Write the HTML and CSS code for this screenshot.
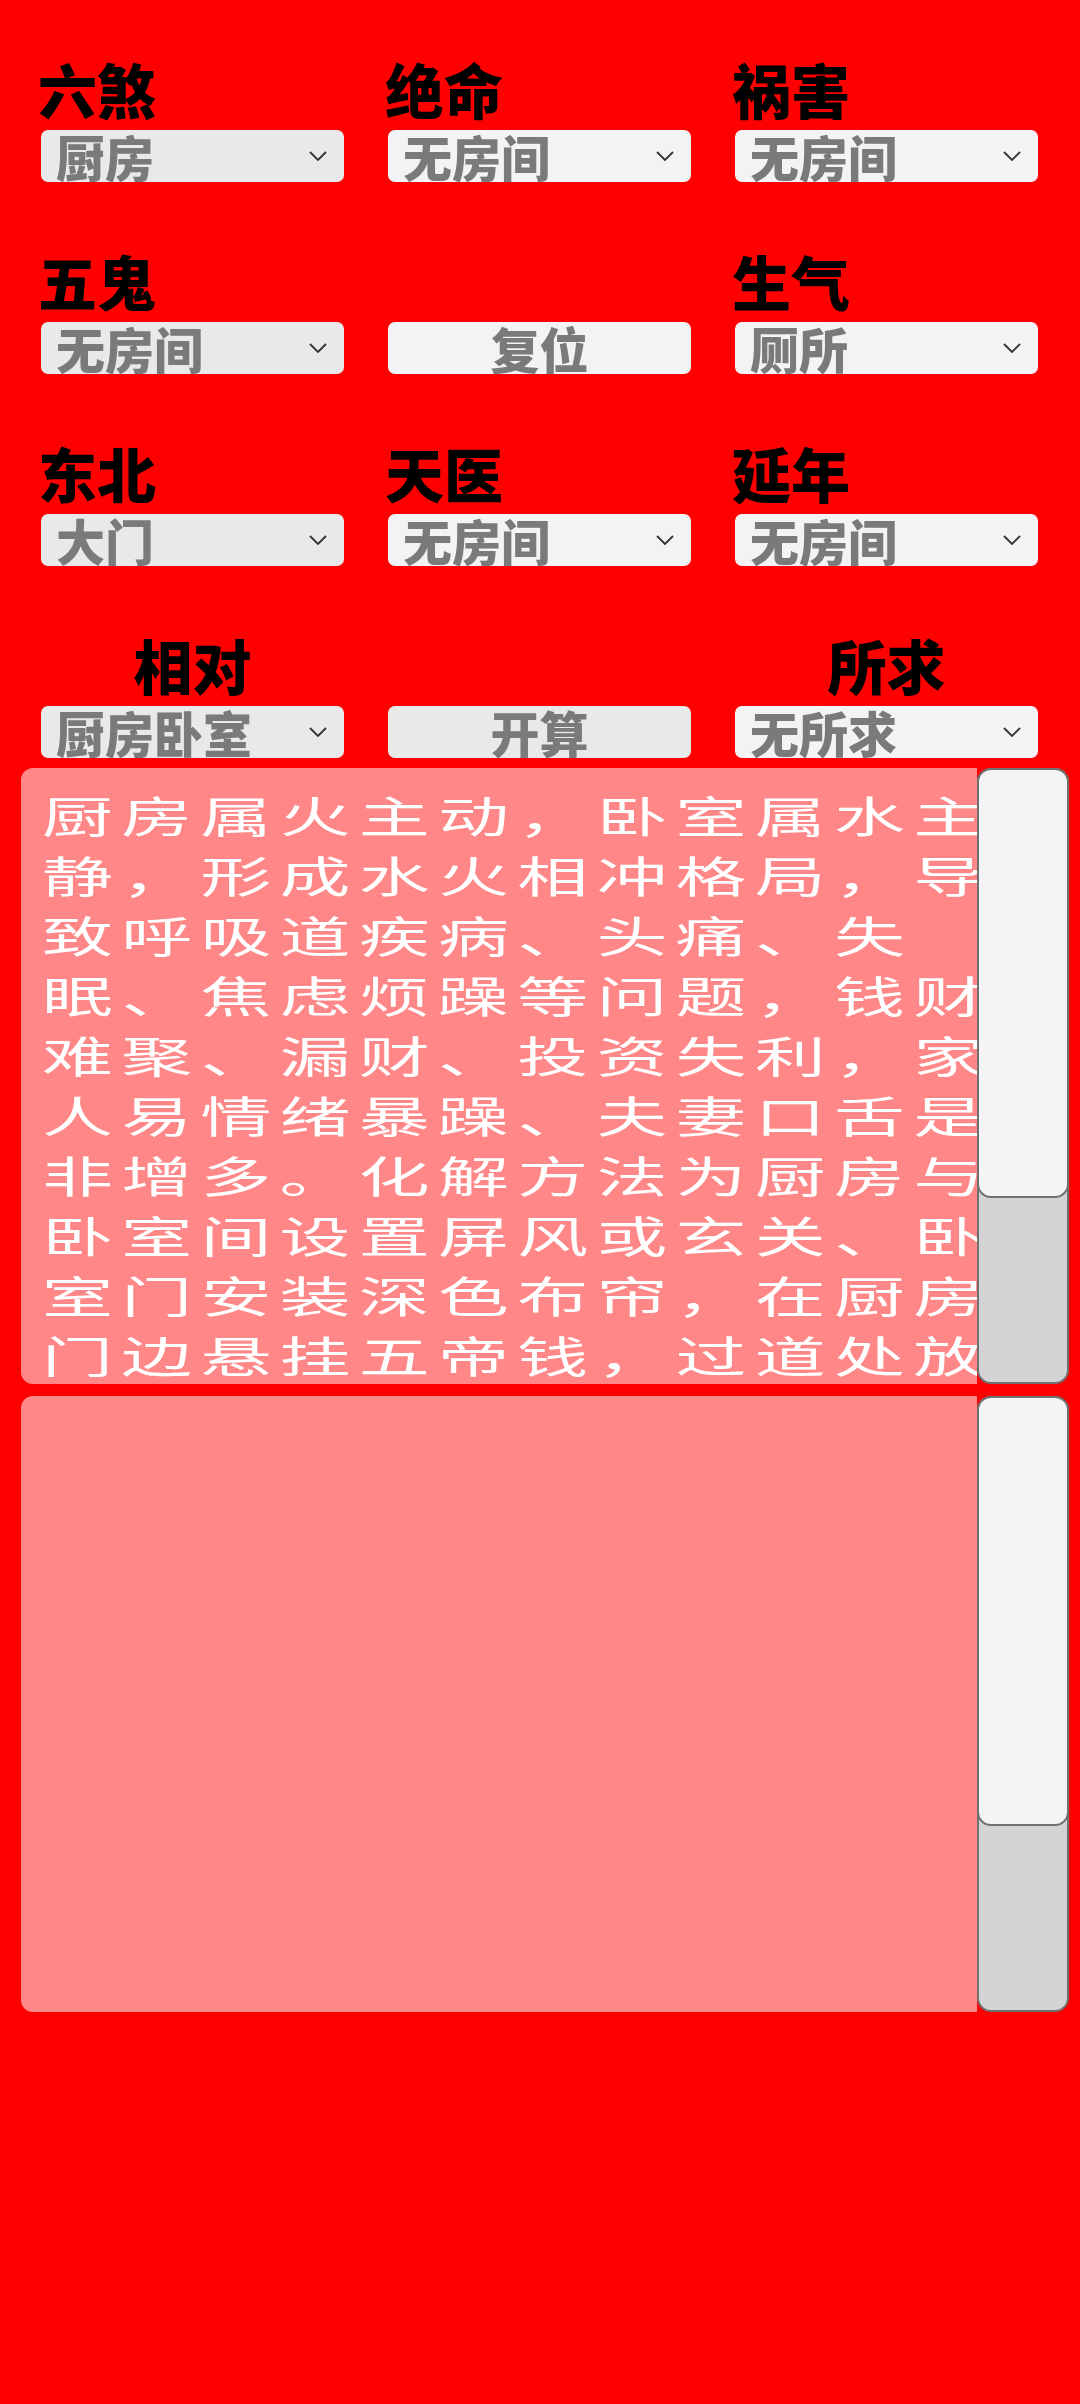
FILE: index.html
```html
<!DOCTYPE html>
<html lang="zh-CN">
<head>
<meta charset="utf-8">
<title>八宅</title>
<link rel="stylesheet" href="styles.css">
</head>
<body>
<div class="page">
  <div class="grid">
    <div class="cell">
      <div class="label">六煞</div>
      <div class="select dim"><span class="val">厨房</span><svg class="chev" width="18" height="10" viewBox="0 0 18 10"><path d="M1 1l8 8 8-8" fill="none" stroke="#333" stroke-width="1.8"/></svg></div>
    </div>
    <div class="cell">
      <div class="label">绝命</div>
      <div class="select"><span class="val">无房间</span><svg class="chev" width="18" height="10" viewBox="0 0 18 10"><path d="M1 1l8 8 8-8" fill="none" stroke="#333" stroke-width="1.8"/></svg></div>
    </div>
    <div class="cell">
      <div class="label">祸害</div>
      <div class="select"><span class="val">无房间</span><svg class="chev" width="18" height="10" viewBox="0 0 18 10"><path d="M1 1l8 8 8-8" fill="none" stroke="#333" stroke-width="1.8"/></svg></div>
    </div>

    <div class="cell">
      <div class="label">五鬼</div>
      <div class="select dim"><span class="val">无房间</span><svg class="chev" width="18" height="10" viewBox="0 0 18 10"><path d="M1 1l8 8 8-8" fill="none" stroke="#333" stroke-width="1.8"/></svg></div>
    </div>
    <div class="cell">
      <div class="label"></div>
      <div class="select button"><span class="val">复位</span></div>
    </div>
    <div class="cell">
      <div class="label">生气</div>
      <div class="select"><span class="val">厕所</span><svg class="chev" width="18" height="10" viewBox="0 0 18 10"><path d="M1 1l8 8 8-8" fill="none" stroke="#333" stroke-width="1.8"/></svg></div>
    </div>

    <div class="cell">
      <div class="label">东北</div>
      <div class="select dim"><span class="val">大门</span><svg class="chev" width="18" height="10" viewBox="0 0 18 10"><path d="M1 1l8 8 8-8" fill="none" stroke="#333" stroke-width="1.8"/></svg></div>
    </div>
    <div class="cell">
      <div class="label">天医</div>
      <div class="select"><span class="val">无房间</span><svg class="chev" width="18" height="10" viewBox="0 0 18 10"><path d="M1 1l8 8 8-8" fill="none" stroke="#333" stroke-width="1.8"/></svg></div>
    </div>
    <div class="cell">
      <div class="label">延年</div>
      <div class="select"><span class="val">无房间</span><svg class="chev" width="18" height="10" viewBox="0 0 18 10"><path d="M1 1l8 8 8-8" fill="none" stroke="#333" stroke-width="1.8"/></svg></div>
    </div>

    <div class="cell">
      <div class="label center">相对</div>
      <div class="select dim"><span class="val">厨房卧室</span><svg class="chev" width="18" height="10" viewBox="0 0 18 10"><path d="M1 1l8 8 8-8" fill="none" stroke="#333" stroke-width="1.8"/></svg></div>
    </div>
    <div class="cell">
      <div class="label"></div>
      <div class="select button dim"><span class="val">开算</span></div>
    </div>
    <div class="cell">
      <div class="label center">所求</div>
      <div class="select"><span class="val">无所求</span><svg class="chev" width="18" height="10" viewBox="0 0 18 10"><path d="M1 1l8 8 8-8" fill="none" stroke="#333" stroke-width="1.8"/></svg></div>
    </div>
  </div>

  <div class="textbox first">
    <div class="tb-content">
      <div class="tb-text">
        <div>厨房属火主动，卧室属水主</div>
        <div>静，形成水火相冲格局，导</div>
        <div>致呼吸道疾病、头痛、失</div>
        <div>眠、焦虑烦躁等问题，钱财</div>
        <div>难聚、漏财、投资失利，家</div>
        <div>人易情绪暴躁、夫妻口舌是</div>
        <div>非增多。化解方法为厨房与</div>
        <div>卧室间设置屏风或玄关、卧</div>
        <div>室门安装深色布帘，在厨房</div>
        <div>门边悬挂五帝钱，过道处放</div>
        <div>置绿植调和水火之气。</div>
      </div>
    </div>
    <div class="sb"><div class="sb-thumb"></div></div>
  </div>

  <div class="textbox second">
    <div class="tb-content"></div>
    <div class="sb"><div class="sb-thumb"></div></div>
  </div>
</div>
</body>
</html>
```

FILE: styles.css
```css
html, body {
  margin: 0;
  padding: 0;
  background: #ff0000;
}

body {
  min-height: 2404px;
  font-family: "Noto Sans CJK SC", "Noto Sans", sans-serif;
}

.page {
  width: 1080px;
}

.grid {
  display: grid;
  grid-template-columns: repeat(3, 303px);
  column-gap: 44px;
  row-gap: 68px;
  padding: 58px 0 0 41px;
}

.cell {
  display: flex;
  flex-direction: column;
}

.label {
  height: 62px;
  margin-bottom: 10px;
  font-size: 59px;
  line-height: 62px;
  font-weight: 900;
  color: #000;
  margin-left: -3px;
  white-space: nowrap;
}

.label.center {
  text-align: center;
  margin-left: 0;
}

.select {
  box-sizing: border-box;
  height: 52px;
  display: flex;
  align-items: flex-start;
  justify-content: space-between;
  padding: 0 17px 0 15px;
  background: #f3f3f5;
  border-radius: 7px;
  overflow: hidden;
}

.select.dim {
  background: #e9e9e9;
}

.select.button {
  justify-content: center;
  padding: 0;
}

.val {
  font-size: 49px;
  line-height: 51px;
  font-weight: 900;
  color: #7a7a7a;
  white-space: nowrap;
}

.chev {
  align-self: center;
  flex: none;
}

.textbox {
  display: flex;
  width: 1048px;
  height: 616px;
  margin-left: 21px;
}

.textbox.first {
  margin-top: 10px;
}

.textbox.second {
  margin-top: 12px;
}

.tb-content {
  flex: 1;
  box-sizing: border-box;
  background: #ff8787;
  border-radius: 12px 0 0 12px;
  overflow: hidden;
  padding: 16px 0 0 21px;
}

.tb-text {
  font-size: 43px;
  line-height: 60px;
  letter-spacing: 5px;
  color: #ffffff;
  white-space: nowrap;
  transform: scaleX(1.65);
  transform-origin: 0 0;
}

.sb {
  flex: none;
  width: 92px;
  box-sizing: border-box;
  display: flex;
  flex-direction: column;
  background: #d4d4d6;
  border: 2px solid #707070;
  border-radius: 14px;
}

.sb-thumb {
  height: 426px;
  margin: -2px -2px 0;
  background: #f4f4f6;
  border: 2px solid #707070;
  border-radius: 14px;
}
```
